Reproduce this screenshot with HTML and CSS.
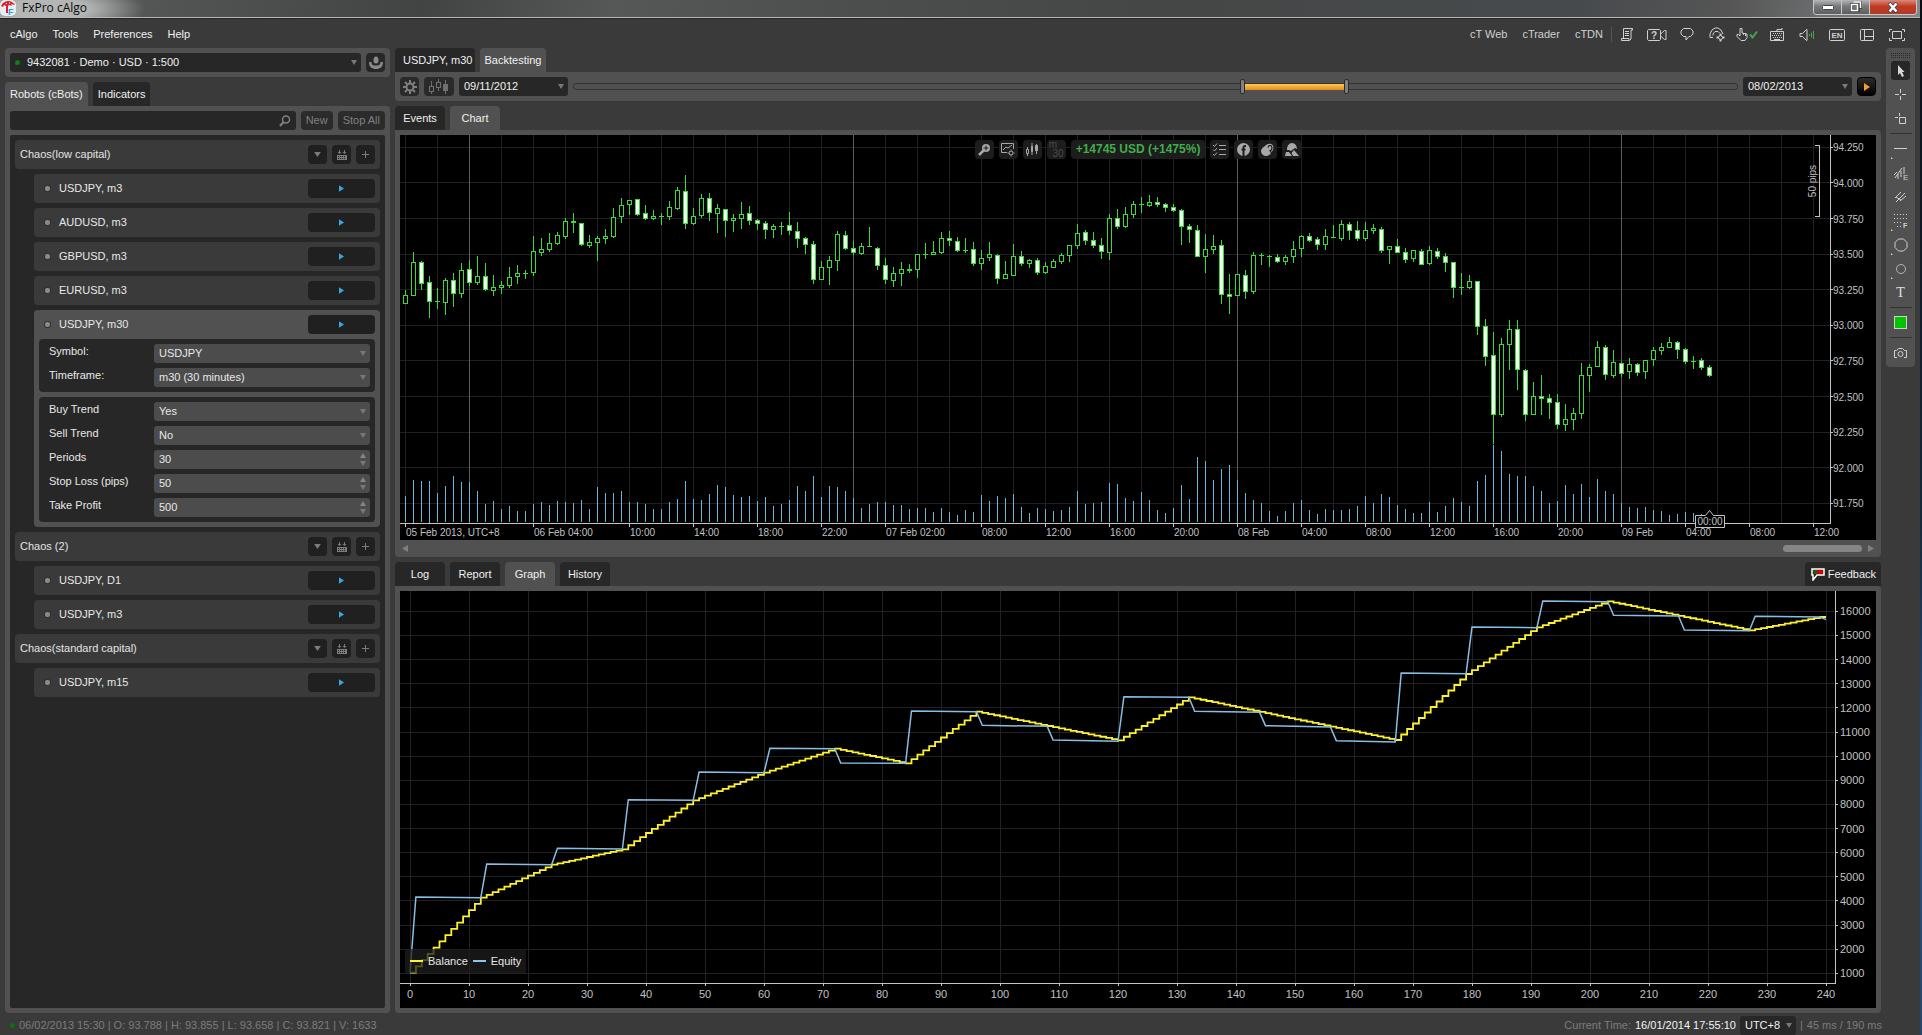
FILE: index.html
```html
<!DOCTYPE html>
<html lang="en">
<head>
<meta charset="utf-8">
<title>FxPro cAlgo</title>
<link rel="stylesheet" href="styles.css">
</head>
<body>
<svg class="sprite" aria-hidden="true">
  <symbol id="i-group-add" viewBox="0 0 12 12"><path fill="currentColor" d="M3 1h1v2h1.500L3.500 5 1.500 3H3zM8 1h1v2h1.500L8.500 5 6.500 3H8zM1 6h10v5H1z"/><path stroke="#1f1f1f" d="M2 7.500h8M2 9.500h8" stroke-dasharray="1 1"/></symbol>
  <symbol id="i-play" viewBox="0 0 6 8"><path fill="currentColor" d="M0 0l6 4-6 4z"/></symbol>
  <symbol id="i-plus" viewBox="0 0 9 9"><path stroke="currentColor" d="M4.500 1v7M1 4.500h7"/></symbol>
  <symbol id="i-down" viewBox="0 0 8 6"><path fill="currentColor" d="M0 0h8L4 6z"/></symbol>
</svg>

<div class="window">
  <header class="titlebar">
    <svg class="logo" viewBox="0 0 16 16"><rect width="16" height="16" rx="5" fill="#e9eef2"/><path fill="#d8232f" d="M1 6C3 2 6 1 9 1c3 .500 5 2 6 4l-4-1 1 2-3-1-1 1v7H6V6L4 5 3 7z"/><path d="M6 3l1 1M9 3h1" stroke="#fff"/><text x="8" y="15" font-size="9" font-weight="700" fill="#2d9fd8">F</text></svg>
    <h1 class="app-name">FxPro cAlgo</h1>
    <div class="window-buttons">
      <button class="wb" aria-label="Minimize"><svg width="12" height="5"><rect x=".5" y=".5" width="11" height="4" rx="1" fill="#fff" stroke="#444"/></svg></button>
      <button class="wb" aria-label="Restore"><svg width="12" height="12"><path d="M3.500 0h8v8M1.500 3.500h7v6h-7z" fill="none" stroke="#444" stroke-width="3"/><path d="M3.500 1h7v6M1.500 3.500h6v6h-6z" fill="none" stroke="#fff" stroke-width="1.500"/></svg></button>
      <button class="wb wb-close" aria-label="Close"><svg width="12" height="11"><path d="M2 1l8 9M10 1l-8 9" stroke="#444" stroke-width="4"/><path d="M2.500 1.500l7 8M9.500 1.500l-7 8" stroke="#fff" stroke-width="2.500"/></svg></button>
    </div>
  </header>

  <div class="menubar">
    <nav class="menu">
      <a href="#">cAlgo</a><a href="#">Tools</a><a href="#">Preferences</a><a href="#">Help</a>
    </nav>
    <nav class="links">
      <a href="#">cT Web</a><a href="#">cTrader</a><a href="#">cTDN</a>
    </nav>
    <div class="tools">
      <button aria-label="Journal"><svg width="12" height="13" viewBox="0 0 12 13"><path d="M2.500 10V.5h9v1.500h-1.500V11l-1.500 1.500h-8V10.500h7.500V12M4 3.500h4M4 5.500h4M4 7.500h4"/></svg></button>
      <button aria-label="Video help"><svg width="20" height="12" viewBox="0 0 20 12"><path d="M1.500.5h11l1 1v9l-1 1h-11l-1-1v-9zM13.500 5l4-3.500h1.500v9h-1.500l-4-3.500"/><text x="7" y="9.500" font-size="10" font-weight="700" text-anchor="middle">?</text></svg></button>
      <button aria-label="Chat"><svg width="14" height="13" viewBox="0 0 14 13"><path d="M3.500.5h7l2.500 2.500v3L10.500 8.500H9L6 12V8.500H3.500L1 6V3z"/></svg></button>
      <button aria-label="Connection"><svg width="16" height="15" viewBox="0 0 16 15"><path d="M4 10.500H1V7l2-4 3-2h3l3 2 2 4M4 8.500V7l2-2.500h3L10.500 6"/><circle cx="11.500" cy="10.500" r="2"/><path d="M11.500 6.500v2M11.500 12.500v2M7.500 10.500h2M13.500 10.500h2" stroke-width="2"/></svg></button>
      <button aria-label="Quick trade"><svg width="22" height="13" viewBox="0 0 22 13"><path d="M5 12.500L1 8.500v-2h1.500L4 8V.5h2V5l5 1v3.500L9 12.500zM7.500 5v2M9.500 6v2"/><path class="on" d="M14 6.500l2.500 3 4.500-6"/></svg></button>
      <button aria-label="Keyboard"><svg width="14" height="13" viewBox="0 0 14 13"><path d="M.5 3.500h13v9H.5zM7 3V1.500h5V0"/><path d="M3 5.500h9M2 7.500h9M3 9.500h9" stroke-dasharray="1 1"/><path d="M4 11.500h6"/></svg></button>
      <button aria-label="Sound"><svg width="17" height="12" viewBox="0 0 17 12"><path d="M1 4.500h2.500l4-4h.5v11h-.5l-4-4H1z"/><path class="on thin" d="M10.500 5v2M12.500 3.500v5M14.500 2v8"/></svg></button>
      <button aria-label="Language"><svg width="18" height="12" viewBox="0 0 18 12"><rect x="1.500" y=".5" width="15" height="11" rx="1"/><text x="9" y="9" font-size="8" font-weight="700" text-anchor="middle">EN</text></svg></button>
      <button aria-label="Layout"><svg width="14" height="12" viewBox="0 0 14 12"><rect x=".5" y=".5" width="13" height="11" rx="1"/><path d="M4.500 1v10M5 7.500h8"/></svg></button>
      <button aria-label="Full screen"><svg width="16" height="12" viewBox="0 0 16 12"><path d="M3.500 2.500h9v7h-9zM.5 3V.5H3M13 .5h2.500V3M15.500 9v2.500H13M3 11.500H.5V9"/></svg></button>
    </div>
  </div>

  <div class="workspace">
    <aside class="side">
      <div class="panel account">
        <div class="combo"><i class="live"></i><select aria-label="Account" class="account-select"><option>9432081 · Demo · USD · 1:500</option></select></div>
        <button class="btn sq" aria-label="Account details"><svg width="14" height="14" viewBox="0 0 14 14" fill="#8a8a8a"><ellipse cx="7" cy="4" rx="2.500" ry="3.500"/><path d="M0 6h2.500c0 3 2 3.500 4.500 3.500S11.500 9 11.500 6H14c0 5-3 7-7 7s-7-2-7-7z"/></svg></button>
      </div>
      <div class="tabs side-tabs"><button class="tab active">Robots (cBots)</button><button class="tab">Indicators</button></div>
      <div class="panel robots">
        <div class="search-row">
          <div class="search"><input type="search" aria-label="Search robots"><svg width="12" height="12" viewBox="0 0 12 12"><circle cx="7" cy="4.500" r="3.500" fill="none" stroke="#808080" stroke-width="1.500"/><path d="M4.500 7L1 11" stroke="#808080" stroke-width="2"/></svg></div>
          <button class="btn muted">New</button><button class="btn muted">Stop All</button>
        </div>
        <div class="tree">
          <div class="group"><span>Chaos(low capital)</span><button class="btn sq" aria-label="Expand"><svg width="7" height="5"><use href="#i-down"/></svg></button><button class="btn sq" aria-label="Build"><svg width="12" height="12"><use href="#i-group-add"/></svg></button><button class="btn sq" aria-label="Add instance"><svg width="9" height="9"><use href="#i-plus"/></svg></button></div>
          <div class="bot"><div class="bot-head"><i></i><span>USDJPY, m3</span><button class="btn run" aria-label="Start"><svg width="5" height="7"><use href="#i-play"/></svg></button></div></div>
          <div class="bot"><div class="bot-head"><i></i><span>AUDUSD, m3</span><button class="btn run" aria-label="Start"><svg width="5" height="7"><use href="#i-play"/></svg></button></div></div>
          <div class="bot"><div class="bot-head"><i></i><span>GBPUSD, m3</span><button class="btn run" aria-label="Start"><svg width="5" height="7"><use href="#i-play"/></svg></button></div></div>
          <div class="bot"><div class="bot-head"><i></i><span>EURUSD, m3</span><button class="btn run" aria-label="Start"><svg width="5" height="7"><use href="#i-play"/></svg></button></div></div>
          <div class="bot open">
            <div class="bot-head"><i></i><span>USDJPY, m30</span><button class="btn run" aria-label="Start"><svg width="5" height="7"><use href="#i-play"/></svg></button></div>
            <div class="params">
              <label for="p-symbol">Symbol:</label><div class="combo field"><select id="p-symbol"><option>USDJPY</option></select></div>
              <label for="p-tf">Timeframe:</label><div class="combo field"><select id="p-tf"><option>m30 (30 minutes)</option></select></div>
            </div>
            <div class="params">
              <label for="p-buy">Buy Trend</label><div class="combo field"><select id="p-buy"><option>Yes</option><option>No</option></select></div>
              <label for="p-sell">Sell Trend</label><div class="combo field"><select id="p-sell"><option>No</option><option>Yes</option></select></div>
              <label for="p-periods">Periods</label><div class="spin field"><input id="p-periods" type="number" value="30"></div>
              <label for="p-sl">Stop Loss (pips)</label><div class="spin field"><input id="p-sl" type="number" value="50"></div>
              <label for="p-tp">Take Profit</label><div class="spin field"><input id="p-tp" type="number" value="500"></div>
            </div>
          </div>
          <div class="group"><span>Chaos (2)</span><button class="btn sq" aria-label="Expand"><svg width="7" height="5"><use href="#i-down"/></svg></button><button class="btn sq" aria-label="Build"><svg width="12" height="12"><use href="#i-group-add"/></svg></button><button class="btn sq" aria-label="Add instance"><svg width="9" height="9"><use href="#i-plus"/></svg></button></div>
          <div class="bot"><div class="bot-head"><i></i><span>USDJPY, D1</span><button class="btn run" aria-label="Start"><svg width="5" height="7"><use href="#i-play"/></svg></button></div></div>
          <div class="bot"><div class="bot-head"><i></i><span>USDJPY, m3</span><button class="btn run" aria-label="Start"><svg width="5" height="7"><use href="#i-play"/></svg></button></div></div>
          <div class="group"><span>Chaos(standard capital)</span><button class="btn sq" aria-label="Expand"><svg width="7" height="5"><use href="#i-down"/></svg></button><button class="btn sq" aria-label="Build"><svg width="12" height="12"><use href="#i-group-add"/></svg></button><button class="btn sq" aria-label="Add instance"><svg width="9" height="9"><use href="#i-plus"/></svg></button></div>
          <div class="bot"><div class="bot-head"><i></i><span>USDJPY, m15</span><button class="btn run" aria-label="Start"><svg width="5" height="7"><use href="#i-play"/></svg></button></div></div>
        </div>
      </div>
    </aside>

    <main class="main">
      <div class="tabs main-tabs"><button class="tab">USDJPY, m30</button><button class="tab active">Backtesting</button></div>
      <div class="panel test-bar">
        <button class="btn sq" aria-label="Settings"><svg width="14" height="14" viewBox="0 0 14 14"><circle cx="7" cy="7" r="3.500" fill="none" stroke="#808080" stroke-width="2"/><path stroke="#808080" stroke-width="2" d="M7 0v3M7 11v3M0 7h3M11 7h3M2 2l2 2M10 10l2 2M12 2l-2 2M4 10l-2 2"/></svg></button>
        <button class="btn visual" aria-label="Visual mode"><svg width="20" height="15" viewBox="0 0 20 15" shape-rendering="crispEdges"><path fill="none" stroke="#707070" d="M.5 7.500h4v5h-4zM2.500 2v5M2.500 13v2M7.500 3.500h4v5h-4zM9.500 0v3M9.500 9v3M16.500 1v14"/><path fill="#707070" d="M14 5h5v7h-5z"/></svg></button>
        <div class="combo date"><select aria-label="Start date"><option>09/11/2012</option></select></div>
        <div class="range">
          <div class="track"></div><div class="fill"></div>
          <input type="range" aria-label="Range start" min="0" max="1000" value="575">
          <input type="range" aria-label="Range end" min="0" max="1000" value="665">
        </div>
        <div class="combo date"><select aria-label="End date"><option>08/02/2013</option></select></div>
        <button class="btn sq start" aria-label="Start backtest"><svg width="6" height="8"><use href="#i-play"/></svg></button>
      </div>

      <div class="tabs"><button class="tab">Events</button><button class="tab active">Chart</button></div>
      <section class="panel chart-panel">
        <div class="chart">
          <svg id="price-chart" role="img" aria-label="USDJPY m30 price chart"></svg>
          <div class="overlay">
            <button aria-label="Zoom"><svg width="13" height="13" viewBox="0 0 13 13"><circle cx="8" cy="5" r="4" fill="currentColor"/><path d="M5.500 7.500L1 12" stroke="currentColor" stroke-width="2.500"/><path d="M8 2.500v5M5.500 5h5" stroke="#1d1d1d"/></svg></button>
            <button aria-label="Chart settings"><svg width="14" height="14" viewBox="0 0 14 14" fill="none" stroke="currentColor"><path d="M6 9.500H.5v-9h12V6M2 7l3-3 2 1 4-3"/><circle cx="10" cy="10" r="2"/><path d="M10 6.500v1M10 12.500v1M6.500 10h1M12.500 10h1M8 8l.5.5M12 8l-.5.5M8 12l.5-.5M12 12l-.5-.5"/></svg></button>
            <button aria-label="Chart type"><svg width="12" height="13" viewBox="0 0 12 13" fill="none" stroke="currentColor"><path d="M.5 6.500h2v4h-2zM1.500 4v2M1.500 11v2M6 0v12M10.500 1v10"/><path fill="currentColor" d="M5.500 3.500h1v5h-1zM9.500 2.500h2v5h-2z"/></svg></button>
            <button class="tf" aria-label="Timeframe"><span>m</span><span>30</span></button>
            <output class="profit">+14745 USD (+1475%)</output>
            <button aria-label="Objects"><svg width="13" height="13" viewBox="0 0 13 13" fill="none" stroke="currentColor"><path d="M0 2l1.500 1.500L4 .5M0 6.500L1.500 8 4 5M0 11l1.500 1.500L4 9.500M6 2.500h7M6 6.500h7M6 11.500h7"/></svg></button>
            <button aria-label="Facebook"><svg width="13" height="13" viewBox="0 0 13 13"><circle cx="6.500" cy="6.500" r="6.500" fill="currentColor"/><path d="M9 3H8C7 3 6.500 3.500 6.500 4.500V13M4.500 6.500h4" fill="none" stroke="#1d1d1d" stroke-width="2"/></svg></button>
            <button aria-label="Share"><svg width="13" height="13" viewBox="0 0 13 13"><path fill="currentColor" d="M0 8c0-2 2-4 4-5 2-2 4-2.500 6-2 2 .500 3 3 2 6l-2 3c-1 2-3 3-5 3S0 11 0 8z"/><path d="M7 4.500l1-2h2l1 2-.5 2.500L9 7.500l1.500 2.500" fill="none" stroke="#1d1d1d" stroke-width="1.200"/></svg></button>
            <button aria-label="Snapshot"><svg width="14" height="13" viewBox="0 0 14 13" fill="currentColor"><path d="M2 7c0-4 2-7 5-7s5 3 5 6l-2-1-4 3-2-1zM0 13l1-4h3l3 4zM9 7l5 6H8L6.500 10z"/></svg></button>
          </div>
        </div>
        <div class="hscroll"><button aria-label="Scroll left"><svg width="6" height="7"><path d="M6 0v7L0 3.500z" fill="#808080"/></svg></button><div class="thumb"></div><button aria-label="Scroll right"><svg width="6" height="7"><path d="M0 0v7l6-3.500z" fill="#808080"/></svg></button></div>
      </section>

      <div class="tabs"><button class="tab">Log</button><button class="tab">Report</button><button class="tab active">Graph</button><button class="tab">History</button>
        <button class="tab feedback"><svg width="14" height="13" viewBox="0 0 14 13"><path d="M1 1h12v6H6l-4 5V7H1z" fill="#222" stroke="#fff" stroke-width="1.500"/><path d="M2 2h4v4H3z" fill="#176117"/><path d="M6 2h6v4H6z" fill="#d00000"/></svg>Feedback</button>
      </div>
      <section class="panel chart-panel">
        <div class="chart">
          <svg id="equity-chart" role="img" aria-label="Balance and equity graph"></svg>
          <div class="legend"><i class="balance"></i>Balance<i class="equity"></i>Equity</div>
        </div>
      </section>
    </main>

    <div class="panel draw">
      <svg class="grip" width="20" height="5"><path d="M0 .5h20M0 2.500h20M0 4.500h20" stroke-dasharray="1 1"/></svg>
      <button class="on" aria-label="Pointer"><svg width="8" height="12" viewBox="0 0 8 12"><path fill="#d8d8d8" d="M1 0l6.500 7H5l2 4-2 1-2-4-2 2z"/></svg></button>
      <button aria-label="Crosshair"><svg width="13" height="13"><path d="M6.500 1v4M6.500 8v4M1 6.500h4M8 6.500h4"/></svg></button>
      <button aria-label="Target"><svg width="13" height="13"><path d="M5.500 1v3M1 5.500h3M5.500 5.500h6v6h-6z"/></svg></button>
      <hr>
      <button class="more" aria-label="Line"><svg width="13" height="3"><path d="M0 1.500h13"/></svg></button>
      <button aria-label="Pitchfork"><svg width="14" height="14" viewBox="0 0 14 14"><path d="M0 9l3-3M1 12l7-10M4 13V8M7 11V5M10 8V1"/><text x="9" y="14" font-size="8">E</text></svg></button>
      <button aria-label="Channel"><svg width="13" height="13"><path d="M1 8l6-6M2 12l9-9M6 11l6-5M2 7l5 3"/></svg></button>
      <button class="more" aria-label="Fibonacci"><svg width="15" height="14" viewBox="0 0 15 14" shape-rendering="crispEdges"><path d="M1 .5h13M1 4.500h13M1 8.500h9M4 12.500h6" stroke-dasharray="1 2"/><text x="10" y="14" font-size="7" font-weight="700">F</text></svg></button>
      <button class="more" aria-label="Shapes"><svg width="14" height="14"><path d="M4.500 1h5L13 4.500v5L9.500 13h-5L1 9.500v-5z"/></svg></button>
      <button class="more" aria-label="Ellipse"><svg width="12" height="12" opacity=".75"><circle cx="6" cy="6" r="4.500"/></svg></button>
      <button class="text-tool" aria-label="Text">T</button>
      <hr>
      <button aria-label="Color"><svg class="swatch" width="13" height="13"><rect x=".5" y=".5" width="12" height="12"/></svg></button>
      <hr>
      <button aria-label="Screenshot"><svg width="13" height="10" viewBox="0 0 13 10"><path d="M3 9.500H.5V2.500h2L4.500.5h4l2 2h2v7H10"/><circle cx="6.500" cy="6" r="2.500"/></svg></button>
    </div>
  </div>

  <footer class="status">
    <i class="live"></i><span>06/02/2013 15:30 | O: 93.788 | H: 93.855 | L: 93.658 | C: 93.821 | V: 1633</span>
    <span class="now">Current Time:</span><time>16/01/2014 17:55:10</time>
    <div class="combo zone"><select aria-label="Time zone"><option>UTC+8</option></select></div>
    <span>|</span><span class="ping">45 ms / 190 ms</span>
  </footer>
</div>
<script src="charts.js"></script>
</body>
</html>
```

FILE: styles.css
```css
* { box-sizing: border-box; }
body {
  margin: 0;
  min-height: 100vh;
  display: flex;
  padding-right: 2px;
  background: linear-gradient(#0a0e14 0, #16283c 50%, #2c5080 75%, #24466e);
  color: #f0f0f0;
  font: 11px/19px "Liberation Sans", Arial, sans-serif;
}
button, input, select { font: inherit; color: inherit; border: 0; margin: 0; padding: 0; background: none; outline: 0; }
select { appearance: none; display: block; width: 100%; height: 19px; padding: 0 16px 0 5px; }
a { color: inherit; text-decoration: none; }
h1 { margin: 0; }
svg { display: block; }
.sprite { position: absolute; width: 0; height: 0; }

.window { flex: 1; min-width: 0; min-height: 100vh; display: flex; flex-direction: column; background: #3a3a3a; }

/* title bar */
.titlebar {
  height: 18px; display: flex; align-items: flex-start; gap: 6px;
  border-bottom: 1px solid #b8b8b4;
  background:
    radial-gradient(ellipse 95px 26px at 50px 9px, #b4b6b5 40%, transparent 100%),
    linear-gradient(100deg, #777978 0, #555756 7%, #424443 22%, #565857 32%, #4c4e4d 45%, #454746 60%, #474a4d 82%, #555 90%, #85888a 100%);
}
.logo { width: 16px; height: 16px; }
.app-name { color: #0a0a0a; font: 400 12px/16px "Open Sans", "Noto Sans", sans-serif; }
.window-buttons { margin: 0 3px 0 auto; display: flex; height: 15px; border: 1px solid #c8c8c8; border-top: 0; border-radius: 0 0 4px 4px; overflow: hidden; }
.wb { width: 28px; display: flex; align-items: center; justify-content: center; background: linear-gradient(#b4b6b8, #77797b 45%, #5c5e60); border-right: 1px solid #c8c8c8; }
.wb-close { width: 46px; border: 0; background: linear-gradient(#d8897c, #c23a24 45%, #b03a28); }

/* menu bar */
.menubar { height: 30px; display: flex; align-items: center; padding: 2px 8px 0 10px; border-top: 1px solid #262626; }
.menu, .links { display: flex; gap: 15px; }
.links { margin-left: auto; padding-right: 8px; color: #d0d0d0; border-right: 1px solid #555; line-height: 15px; }
.tools { display: flex; }
.tools button { width: 30px; height: 20px; display: flex; align-items: center; justify-content: center; }
.tools svg, .draw svg { fill: none; stroke: #d0d0d0; overflow: visible; }
.tools text, .draw text { fill: #d0d0d0; stroke: none; }
.tools .on { stroke: #43a848; stroke-width: 2; }
.tools .on.thin { stroke-width: 1; }

/* shared parts */
.workspace { flex: 1; display: flex; align-items: stretch; gap: 5px; padding: 0 5px; }
.panel { background: #515151; border-radius: 4px; padding: 5px; }
.btn { height: 19px; border-radius: 4px; background: #202020; display: flex; align-items: center; justify-content: center; }
.sq { width: 19px; flex: none; }
.combo { position: relative; background: #272727; border-radius: 3px; }
.combo::after, .spin::after { content: ""; position: absolute; right: 4px; top: 7px; border: 3px solid transparent; border-top: 5px solid #787878; border-bottom: 0; pointer-events: none; }
.live { width: 5px; height: 5px; border-radius: 50%; background: #108010; }
.tabs { display: flex; gap: 5px; margin-top: 5px; height: 24px; }
.tab { min-width: 50px; padding: 0 5px; background: #272727; border-radius: 4px 4px 0 0; line-height: 24px; }
.tab.active { background: #515151; }
.tabs + .panel { border-top-left-radius: 0; }

/* left column */
.side { width: 385px; flex: none; display: flex; flex-direction: column; }
.account { display: flex; gap: 5px; }
.account .combo { flex: 1; display: flex; align-items: center; padding-left: 5px; }
.account-select { padding-left: 7px; }
.account .btn { background: #272727; }
.robots { flex: 1; display: flex; flex-direction: column; gap: 5px; }
.search-row { display: flex; gap: 5px; }
.search { flex: 1; display: flex; align-items: center; padding: 0 5px; background: #272727; border-radius: 3px; }
.search input { flex: 1; min-width: 0; height: 19px; appearance: none; }
.muted { padding: 0 5px; color: #808080; background: #2b2b2b; }
.tree { flex: 1; display: flex; flex-direction: column; gap: 5px; padding: 5px; background: #272727; border-radius: 2px; }
.group, .bot-head { display: flex; align-items: center; gap: 5px; height: 29px; padding: 5px; }
.group { background: #3a3a3a; border-radius: 4px; color: #e4e4e4; }
.group span, .bot-head span { flex: 1; }
.group .btn { color: #7c7c7c; }
.bot { margin-left: 19px; background: #3a3a3a; border-radius: 4px; color: #e8e8e8; }
.bot-head { padding-left: 11px; gap: 9px; }
.bot-head i { width: 5px; height: 5px; background: #8a8a8a; border-radius: 2px; box-shadow: 0 0 0 1px #303030; }
.run { width: 67px; color: #38a8e0; }
.bot.open { background: #515151; padding-bottom: 5px; }
.open .params + .params { margin-top: 5px; }
.params { margin: 0 5px; padding: 5px 5px 5px 10px; background: #272727; border-radius: 4px; display: grid; grid-template-columns: 105px 1fr; row-gap: 5px; }
.params label { line-height: 15px; }
.field { position: relative; background: #4c4c4c; border-radius: 3px; line-height: 19px; }
.spin input { width: 100%; height: 19px; padding: 0 16px 0 5px; appearance: textfield; display: block; }
.spin input::-webkit-inner-spin-button { display: none; }
.spin::before { content: ""; position: absolute; right: 4px; top: 3px; border: 3px solid transparent; border-bottom: 5px solid #848484; border-top: 0; pointer-events: none; }
.spin::after { top: 11px; }

/* centre column */
.main { flex: 1; min-width: 0; display: flex; flex-direction: column; }
.main-tabs { margin-top: 0; }
.main-tabs .tab:first-child { padding: 0 2px 0 8px; }
.test-bar { display: flex; gap: 5px; }
.test-bar .btn { background: #2a2a2a; }
.visual { width: 30px; }
.date { width: 109px; flex: none; }
.test-bar .start { background: linear-gradient(#2c2c2c, #000); border: 1px solid #000; color: #f0a030; }
.range { position: relative; flex: 1; height: 19px; }
.range .track { margin-top: 6px; height: 7px; border: 1px solid #333; border-radius: 3px; }
.range .fill { position: absolute; left: 57.500%; right: 33.500%; top: 7px; height: 6px; background: linear-gradient(#ffc85a, #e88c18); }
.range input { position: absolute; inset: 0; width: 100%; appearance: none; pointer-events: none; }
.range input::-webkit-slider-thumb { appearance: none; width: 5px; height: 15px; border: 1px solid #2a2a2a; border-radius: 2px; background: #808080; pointer-events: auto; }
.chart-panel { flex: 1 1 300px; display: flex; flex-direction: column; }
.tabs + .chart-panel:has(.hscroll) { padding-bottom: 0; }
.chart { flex: 1; min-height: 0; position: relative; background: #000; display: flex; }
.chart > svg { position: absolute; inset: 0; width: 100%; height: 100%; }
.overlay { position: absolute; left: 0; right: 0; top: 5px; display: flex; justify-content: center; gap: 5px; color: #a8a8a8; pointer-events: none; }
.overlay button { width: 19px; height: 19px; border-radius: 4px; background: #1d1d1d; display: flex; align-items: center; justify-content: center; }
.overlay .tf { display: grid; grid-template-columns: 15px; color: #4a4a4a; line-height: 8px; font-size: 10px; }
.tf span:first-child { text-align: left; }
.tf span:last-child { text-align: right; }
.profit { padding: 0 5px; background: #1d1d1d; border-radius: 4px; font-size: 12px; font-weight: 700; color: #40ae4c; }
.hscroll { height: 17px; display: flex; align-items: center; justify-content: space-between; padding: 0 2px; gap: 6px; }
.thumb { margin-left: auto; width: 79px; height: 7px; border-radius: 4px; background: #868686; }
.feedback { margin-left: auto; display: flex; align-items: center; gap: 3px; padding-left: 6px; }
.legend { position: absolute; left: 5px; bottom: 35px; display: flex; align-items: center; gap: 5px; height: 24px; padding: 0 5px; background: rgba(30, 30, 30, .75); color: #e8e8e8; }
.legend i { width: 13px; height: 2px; background: #f8f230; }
.legend .equity { background: #8cc4ec; }

/* drawing tools */
.draw { width: 29px; flex: none; align-self: flex-start; display: flex; flex-direction: column; gap: 5px; }
.draw .grip { margin-bottom: -2px; stroke: #2b2b2b; }
.draw button { position: relative; height: 19px; border-radius: 3px; display: flex; align-items: center; justify-content: center; }
.draw .on { background: #272727; }
.draw .on svg { stroke: none; }
.draw .swatch { fill: #00c400; }
.draw hr { width: 22px; height: 1px; margin: 0 -1px; border: 0; background: #333; }
.draw .more::before { content: ""; position: absolute; left: 0; bottom: -1px; border: 1px solid; border-color: transparent transparent #d0d0d0 #d0d0d0; }
.draw .text-tool { font: 14px/19px "Liberation Serif", serif; color: #e0e0e0; }

/* status bar */
.status { height: 22px; display: flex; align-items: center; gap: 4px; padding: 3px 38px 0 10px; color: #7c7c7c; }
.now { margin-left: auto; }
.status time { color: #f4f4f4; }
.zone { width: 56px; color: #f0f0f0; }
.status .live { background: #0c700c; }
```

FILE: charts.js
```js
// Candles: high, body top, body bottom, low, kind (h hollow, f filled, d doji).
// Levels count down the price scale; 427 levels are one yen.
const CANDLES = `390 405 431 431 h|277 307 407 407 h|304 307 371 389 f|349 367 425 473 f|384 424 424 446 d|355 361 429 464 h|339 361 401 441 f|309 331 401 413 h|300 328 368 377 f|289 349 368 375 h|310 349 389 392 f|346 381 392 407 h|363 375 383 401 h|322 351 377 384 h|316 339 350 372 h|331 340 340 357 d|228 274 338 347 h|235 268 278 287 h|220 250 269 275 h|217 226 251 254 h|175 184 230 236 h|159 184 190 219 f|190 190 254 258 f|226 247 257 263 h|229 235 250 302 h|207 229 236 251 h|145 172 230 233 h|114 136 170 188 h|120 121 136 164 h|118 118 164 168 f|136 160 177 180 f|151 169 176 178 h|159 169 169 194 d|124 142 170 179 h|82 91 146 148 h|45 94 191 206 f|145 169 191 194 h|102 115 167 173 h|99 115 160 182 f|133 145 161 219 h|148 148 182 231 f|163 175 182 216 h|126 163 176 207 h|138 160 182 194 f|178 181 191 209 f|183 190 209 237 f|193 199 209 234 h|187 199 199 225 d|156 196 212 224 f|187 214 236 264 f|231 235 254 281 f|243 253 359 371 f|303 322 359 359 h|289 301 323 375 h|213 223 302 332 h|213 226 266 269 f|243 265 278 286 f|250 259 281 285 h|202 259 259 263 d|262 265 317 330 f|295 316 361 371 f|321 340 362 381 h|306 328 341 378 h|313 328 334 338 f|283 283 331 353 h|250 284 284 297 d|243 277 284 284 h|217 235 278 281 h|213 235 244 257 f|232 244 272 275 f|235 271 271 279 d|247 268 311 317 f|271 295 311 329 h|247 283 293 302 h|283 286 356 371 f|304 343 356 356 h|253 290 347 347 h|274 290 311 317 f|298 301 311 323 h|295 301 338 344 f|307 319 338 342 h|298 304 323 323 h|280 286 305 311 h|256 256 287 305 h|193 220 257 266 h|211 217 242 254 f|217 241 257 263 f|235 256 275 296 f|163 175 278 299 h|148 175 200 206 f|141 163 200 203 h|123 133 164 173 h|111 133 133 158 d|105 127 137 140 h|111 127 134 140 f|129 133 143 155 f|133 142 152 155 f|148 151 200 254 f|193 199 211 248 f|196 211 290 290 f|223 268 290 338 h|226 259 269 281 h|240 256 404 431 f|343 403 410 461 f|343 343 407 407 h|331 346 395 416 f|277 286 396 402 h|280 287 287 315 d|286 290 290 323 d|283 292 305 308 f|286 292 305 314 h|243 268 290 308 h|226 229 266 290 h|220 229 243 246 f|232 238 254 269 f|207 229 254 269 h|196 232 232 236 d|181 193 236 242 h|187 193 212 239 f|184 211 236 242 f|187 211 236 242 h|193 206 212 221 h|202 208 272 278 f|259 259 269 311 h|237 259 278 278 f|265 277 299 308 f|271 271 296 305 h|268 274 314 314 f|259 271 311 314 h|265 274 290 296 f|280 289 308 335 f|307 307 383 413 f|340 382 382 407 d|346 364 383 386 h|364 364 500 524 f|478 499 590 617 f|516 586 764 851 f|535 553 764 770 h|480 508 554 629 h|480 508 629 689 f|628 631 764 782 f|667 709 764 764 h|646 709 716 764 f|703 715 728 776 f|703 727 794 806 f|733 778 794 812 h|745 760 779 809 h|610 646 761 776 h|613 622 647 695 h|544 562 620 620 h|557 562 644 659 f|571 607 647 653 h|607 610 641 651 f|595 613 637 656 h|610 613 638 647 f|601 601 635 656 h|562 571 599 617 h|550 562 572 584 h|532 547 563 563 h|544 547 569 596 f|565 568 605 611 f|589 604 604 629 d|595 601 623 629 f|616 622 647 650 f`
  .split("|").map(r => r.split(" "));

// Tick volume per candle, on the same level scale.
const VOLUMES = [79,129,124,126,88,109,139,121,121,94,55,64,40,49,34,34,55,61,52,64,61,58,67,40,106,88,88,94,61,61,55,40,40,61,70,124,70,67,85,112,106,82,76,79,64,76,49,55,67,109,94,139,76,109,106,94,73,43,55,61,61,52,52,40,43,43,31,43,31,22,37,31,82,64,79,73,85,46,28,43,40,34,37,46,94,55,58,61,118,115,73,64,91,67,37,28,43,112,70,196,184,127,160,172,127,88,67,58,34,19,34,58,67,37,25,40,37,37,40,49,79,58,85,76,52,40,28,28,61,31,49,73,61,49,124,142,232,214,145,139,139,109,94,58,64,112,85,115,76,130,94,85,58,46,43,46,37,34,22,25,31,28,26,26];

const TIME_LABELS = [[0,"05 Feb 2013, UTC+8"],[16,"06 Feb 04:00"],[28,"10:00"],[36,"14:00"],[44,"18:00"],[52,"22:00"],[60,"07 Feb 02:00"],[72,"08:00"],[80,"12:00"],[88,"16:00"],[96,"20:00"],[104,"08 Feb"],[112,"04:00"],[120,"08:00"],[128,"12:00"],[136,"16:00"],[144,"20:00"],[152,"09 Feb"],[160,"04:00"],[168,"08:00"],[176,"12:00"]];

// Trade number and level; 1300 is 1000 USD, 72.4 levels are another 1000 USD.
const BALANCE = [[0,1298],[12,1073],[24,974],[36,928],[48,781],[60,698],[72,626],[84,670],[96,515],[120,601],[132,472],[167,600],[179,402],[191,262],[203,184],[227,271],[239,231],[240,231]];
const EQUITY = [[0,1298],[1,1071],[12,1073],[13,972],[24,974],[25,925],[36,927],[37,779],[48,781],[49,696],[60,698],[61,625],[72,626],[73,669],[84,670],[85,513],[96,515],[97,556],[108,559],[109,600],[120,604],[121,470],[132,472],[133,514],[144,517],[145,557],[156,561],[157,602],[167,606],[168,399],[179,401],[180,261],[191,263],[192,183],[203,185],[204,226],[215,228],[216,270],[227,272],[228,229],[239,231],[240,239]];

const GREEN = "#3cd83c";
const AXIS = "#c4c4c4";

const box = (x, y, w, h, fill) => `<rect x="${Math.floor(x)}" y="${Math.floor(y)}" width="${w}" height="${Math.max(1, Math.round(h))}" fill="${fill}"/>`;
const label = (x, y, text, extra = "") => `<text x="${Math.round(x)}" y="${Math.round(y)}" fill="#c0c0c0" ${extra}>${text}</text>`;

function drawPrices(svg) {
  const W = svg.clientWidth, H = svg.clientHeight;
  const base = H - 17, axis = W - 46, s = base / 388;
  const Y = level => (25 + level / 3) * s;
  const X = i => 5 + 8 * i;
  let out = "";
  for (let k = 0; k <= 10; k++) out += box(0, (12.4 + 35.59 * k) * s, axis, 1, "#202022");
  for (let k = 0; X(4 * k) < axis; k++) out += box(X(4 * k), 0, 1, base, k % 12 === 2 ? "#5c5c5c" : "#202022");
  VOLUMES.forEach((v, i) => { out += box(X(i), base - v / 3 * s, 1, v / 3 * s, "#6cb4dc"); });
  CANDLES.forEach(([hi, top, bottom, lo, kind], i) => {
    const x = X(i), t = Math.floor(Y(+top)), b = Math.round(Y(+bottom));
    if (kind === "d") {
      out += box(x, Y(+hi), 1, Y(+lo) - Y(+hi), GREEN) + box(x - 2, t, 5, 1, GREEN);
      return;
    }
    if (+hi < +top) out += box(x, Y(+hi), 1, t - Math.floor(Y(+hi)), GREEN);
    if (+lo > +bottom) out += box(x, b, 1, Y(+lo) - b, GREEN);
    out += `<rect x="${x - 1.5}" y="${t + .5}" width="4" height="${Math.max(1, b - t - 1)}" fill="${kind === "f" ? "#f0fff0" : "#000"}" stroke="${GREEN}"/>`;
  });
  out += box(0, base, axis + 1, 1, AXIS) + box(axis, 0, 1, base, AXIS);
  for (let k = 0; k <= 10; k++) {
    const y = (12.4 + 35.59 * k) * s;
    out += box(axis, y, 3, 1, AXIS) + label(axis + 3, y + 4, (94.25 - k * 0.25).toFixed(3));
  }
  TIME_LABELS.forEach(([i, t]) => { out += box(X(i), base, 1, 4, AXIS) + label(X(i) + 1, base + 13, t); });
  const r = axis - 11;
  out += `<path d="M${r - 4} 10.500h4v71h-4" fill="none" stroke="${AXIS}"/>`;
  out += `<text transform="translate(${r - 3} 46) rotate(-90)" text-anchor="middle" fill="#c0c0c0">50 pips</text>`;
  const c = X(163) + 1;
  out += `<path d="M${c - 14.5} ${base - 7.5}h10l4-5 4 5h11v12h-29z" fill="#000" stroke="${AXIS}" shape-rendering="auto"/>` + label(c, base + 2, "00:00", 'text-anchor="middle"');
  svg.innerHTML = `<g font-family="'Liberation Sans', Arial, sans-serif" font-size="10" shape-rendering="crispEdges">${out}</g>`;
}

function drawEquity(svg) {
  const W = svg.clientWidth, H = svg.clientHeight;
  const base = H - 25, axis = W - 41, s = base / 392, step = (W - 60) / 240;
  const X = n => 10 + step * n;
  const Y = level => (level / 3 - 51) * s;
  let out = "";
  for (let k = 0; k < 16; k++) out += box(0, Y(214 + 72.4 * k), axis, 1, "#222224");
  for (let n = 0; n <= 240; n += 10) out += box(X(n), 0, 1, base, "#222224");
  let path = "";
  for (let i = 1; i < BALANCE.length; i++) {
    const [a, va] = BALANCE[i - 1], [b, vb] = BALANCE[i];
    for (let n = a; n < b; n++) {
      const y = Y(va + (vb - va) * (n - a) / (b - a));
      path += `${path ? "V" + y : "M" + X(n) + " " + y}H${X(n + 1)}`;
    }
  }
  out += `<path d="${path}" fill="none" stroke="#fff22a" stroke-width="1.800" shape-rendering="auto"/>`;
  out += `<polyline points="${EQUITY.map(([n, v]) => X(n) + "," + Y(v)).join(" ")}" fill="none" stroke="#86bee6" stroke-width="1.500" shape-rendering="auto"/>`;
  out += box(0, base, axis + 1, 1, AXIS) + box(axis, 0, 1, base, AXIS);
  for (let k = 0; k < 16; k++) out += box(axis, Y(214 + 72.4 * k), 3, 1, AXIS) + label(axis + 5, Y(214 + 72.4 * k) + 4, 16000 - 1000 * k);
  for (let n = 0; n <= 240; n += 10) out += box(X(n), base, 1, 3, AXIS) + label(X(n), base + 15, n, 'text-anchor="middle"');
  svg.innerHTML = `<g font-family="'Liberation Sans', Arial, sans-serif" font-size="11" shape-rendering="crispEdges">${out}</g>`;
}

function draw() {
  drawPrices(document.getElementById("price-chart"));
  drawEquity(document.getElementById("equity-chart"));
}
draw();
window.addEventListener("resize", draw);
```
